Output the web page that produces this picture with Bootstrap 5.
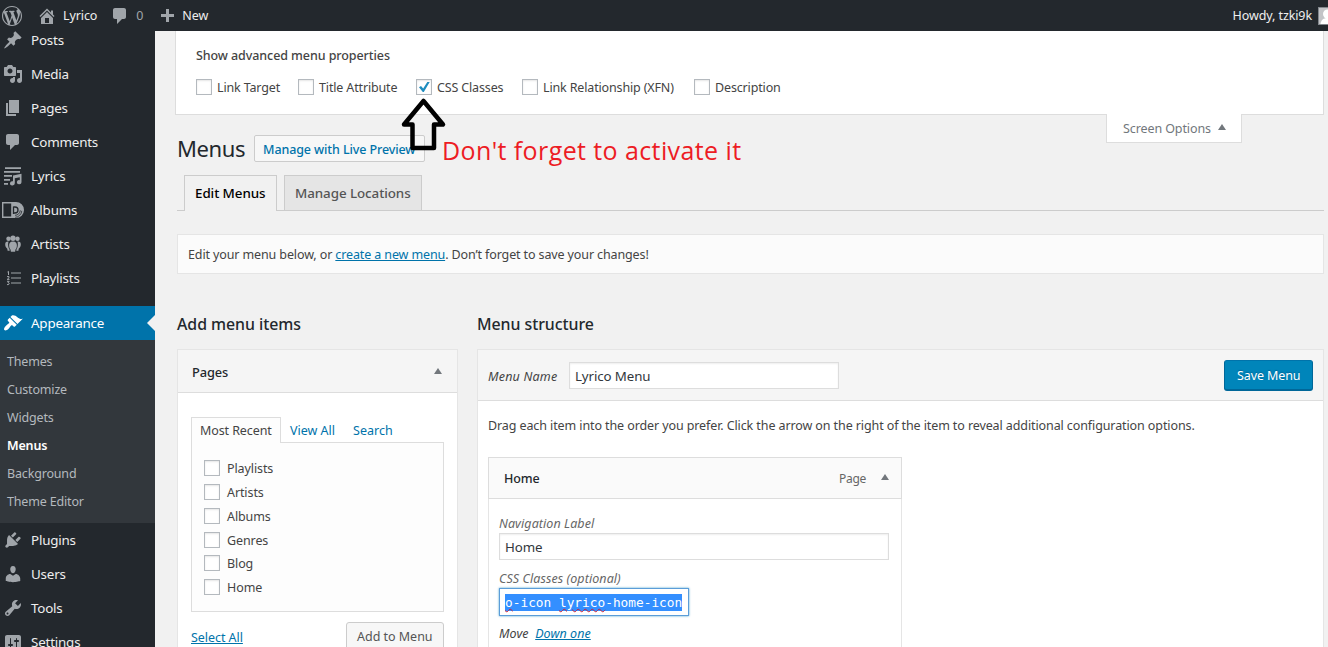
<!DOCTYPE html>
<html lang="en">
<head>
<meta charset="utf-8">
<meta name="viewport" content="width=device-width, initial-scale=1">
<title>Menus ‹ Lyrico — WordPress</title>
<link href="https://cdn.jsdelivr.net/npm/bootstrap@5.3.0/dist/css/bootstrap.min.css" rel="stylesheet">
<style>
html,body{height:100%;overflow:hidden}
body{font:12.5px/18px "Noto Sans","Open Sans",sans-serif;letter-spacing:-.1px;color:#444;background:#f1f1f1}
svg{display:block;flex:none;fill:currentColor}
a{color:#0073aa}
.adminbar{height:31px;background:#23282d;color:#eee;position:relative;z-index:3;padding-left:2px}
.adminbar svg{color:#a0a5aa}
.adminbar .ic-home{margin:0 6px 0 15px}
.adminbar .ic-note{margin:0 6px 0 13px}
.adminbar .ic-plus{margin:1px 5px 0 14px}
.adminbar .count{color:#a0a5aa}
.avatar{width:10px;height:18px;background:#c3c4c7;border:1px solid #82878c;border-right:0;overflow:hidden;margin-left:6px}
.adminbar .avatar svg{color:#fff}
.shell{height:616px;overflow:hidden}
.sidemenu{width:155px;background:#23282d;margin-top:-8px;height:632px}
.item{height:34px;padding-left:3px;gap:8px;font-size:13.4px;letter-spacing:-.2px;color:#eee}
.item svg{color:#a0a5aa}
.item .wide{margin:0 -1px 0 -1px}
.item.current{margin-top:11px;background:#0073aa;color:#fff;position:relative}
.item.current svg{color:#fff}
.item.current::after{content:"";position:absolute;right:0;top:9px;border:8px solid transparent;border-left:0;border-right-color:#f1f1f1}
.submenu{background:#32373c;padding:7px 0 8px 7px;color:#b4b9be;letter-spacing:-.17px}
.submenu div{height:28px;line-height:29px}
.submenu .on{color:#fff;font-weight:600}
.main{padding:0 4px 0 20px;min-width:0}
.meta{height:84px;background:#fff;border:1px solid #ddd;border-top:0;padding:16px 20px 0}
.meta .legend-text{font-weight:500;letter-spacing:-.08px}
.props{display:grid;grid-template-columns:102px 118px 106px 172px auto;margin-top:12px;letter-spacing:-.15px}
.props>div{gap:5px;padding-top:2px}
.tick{width:16px;height:16px;background:#fff;border:1px solid #b4b9be;box-shadow:inset 0 1px 2px rgba(0,0,0,.1);flex:none;margin-top:-2px}
.screenopt{width:136px;height:29px;background:#fff;border:1px solid #ddd;border-top:0;margin:-1px 82px 0 auto;padding:1px 0 0 16px;gap:7px;color:#72777c;position:relative}
.screenopt .tri{margin-top:-3px}
.tri{border:4px solid transparent;border-top:0;border-bottom:6px solid #72777c;width:0;height:0}
.wrapper{padding-left:2px}
.titlerow{height:27px;margin-top:-8px;gap:9px}
h1{font-size:22px;line-height:27px;font-weight:400;letter-spacing:-.4px;color:#23282d;margin:0;width:68px}
.preview{border:1px solid #ccc;background:#f7f7f7;border-radius:2px;color:#0073aa;font-weight:550;letter-spacing:-.1px;height:27px;width:171px;padding-left:8px;line-height:27px}
.tabrow{height:36px;margin-top:13px;padding-left:7px;border-bottom:1px solid #ccc;gap:7px;font-weight:550;font-size:13.4px;letter-spacing:-.08px}
.tabrow div{border:1px solid #ccc;border-bottom:0;height:35px;line-height:34px;padding-left:10px;background:#e5e5e5;color:#555}
.tabrow .on{height:36px;background:#f1f1f1;color:#000;width:93px}
.tabrow .off{width:138px}
.notice{height:40px;margin-top:23px;background:#fbfbfb;border:1px solid #e5e5e5;padding-left:10px;line-height:39px;letter-spacing:-.12px}
h2{font-size:15.9px;line-height:20px;font-weight:550;letter-spacing:-.06px;color:#23282d;margin:0 0 15px}
.halves{margin-top:40px;gap:19px}
.leftcol{width:281px;flex:none}
.panel{background:#fff;border:1px solid #e5e5e5;height:400px}
.phead{height:43px;background:#f5f5f5;border-bottom:1px solid #ddd;padding:1px 15px 0 14px;color:#23282d;font-weight:550;font-size:12.8px}
.phead .tri{margin-top:-2px}
.ptabs{margin:24px 13px 0;height:26px;line-height:27px;position:relative;z-index:1}
.ptabs .on{width:90px;height:26px;border:1px solid #ddd;border-bottom:0;background:#fdfdfd;padding-left:8px;margin-right:9px;line-height:26px}
.ptabs a{margin-right:18px;text-decoration:none;letter-spacing:0}
.plist{margin:-1px 13px 0;height:170px;border:1px solid #ddd;background:#fdfdfd;padding:13.400px 12px}
.plist div.opt{height:23.800px;gap:7px;padding-top:2px}
.pfoot{margin:10px 13px 0}
.pfoot a{line-height:31px;letter-spacing:-.05px}
.addbtn{width:98px;height:29px;border:1px solid #ccc;background:#f7f7f7;border-radius:3px;color:#555;padding-left:10px;line-height:28px;letter-spacing:-.02px}
.mhead{height:51px;background:#f5f5f5;border-bottom:1px solid #ddd;padding:0 10px}
.mhead em{width:70px;padding-top:3px;letter-spacing:.2px}
.field{background:#fff;border:1px solid #ddd;box-shadow:inset 0 1px 2px rgba(0,0,0,.07);height:27px;padding-left:5px;color:#32373c;font-size:13.300px;line-height:26px}
.menuname{width:270px;margin-left:11px}
.save{width:89px;height:31px;background:#0085ba;border:1px solid #006799;border-top-color:#0073aa;border-bottom-width:2px;border-radius:3px;color:#fff;padding-left:12px;line-height:29px;text-shadow:0 -1px 1px #006799}
.intro{margin:16px 0 0 10px}
.mitem{width:414px;margin:22px 0 0 10px;height:300px;border:1px solid #e5e5e5}
.mihead{height:42px;border:1px solid #ddd;background:#fafafa;margin:-1px;padding:1px 12px 0 15px;color:#23282d;font-weight:550}
.mihead .tri{margin-top:-3px}
.kind{color:#666;font-weight:400;font-size:12px;margin-right:15px;letter-spacing:-.3px;padding-top:1px}
.mibody{padding:17px 12px 0 10px}
.lab{color:#666;font-style:italic;letter-spacing:.08px;line-height:18px}
.lab.second{margin-top:10px}
.cssf{width:190px;height:28px;border:1px solid #5b9dd9;box-shadow:0 0 2px rgba(30,140,190,.8);background:#fff;padding-left:5px;padding-top:1px}
.cssf span{background:#338fff;color:#fff;height:17px;line-height:17px;font-family:"DejaVu Sans Mono",monospace;font-size:12.800px;letter-spacing:0;width:177px;white-space:pre}
.cssf u{text-decoration:underline wavy #c0223f 1px;text-underline-offset:1px}
.moverow{margin-top:9px;letter-spacing:.05px}
.arrow{position:absolute;left:400px;top:97px;z-index:4}
.remark{position:absolute;left:442px;top:133px;font-family:"Open Sans",sans-serif;font-size:25px;letter-spacing:.4px;line-height:34px;color:#ed1c24;white-space:nowrap;z-index:4}
</style>
</head>
<body>
<header class="adminbar d-flex align-items-center">
  <svg width="20" height="20" viewBox="0 0 20 20"><path d="M20 10c0-5.51-4.49-10-10-10C4.48 0 0 4.49 0 10c0 5.52 4.48 10 10 10 5.51 0 10-4.48 10-10zM7.78 15.37L4.37 6.22c.55-.02 1.17-.08 1.17-.08.5-.06.44-1.13-.06-1.11 0 0-1.45.11-2.37.11-.18 0-.37 0-.58-.01C4.12 2.69 6.87 1.11 10 1.11c2.33 0 4.45.87 6.05 2.34-.68-.11-1.65.39-1.65 1.58 0 .74.45 1.36.9 2.1.35.61.55 1.36.55 2.46 0 1.49-1.4 5-1.4 5l-3.03-8.37c.54-.02.82-.17.82-.17.5-.05.44-1.25-.06-1.22 0 0-1.44.12-2.38.12-.87 0-2.33-.12-2.33-.12-.5-.03-.56 1.2-.06 1.22l.92.08 1.26 3.41zM17.41 10c.24-.64.74-1.87.43-4.25.7 1.29 1.05 2.71 1.05 4.25 0 3.29-1.73 6.24-4.4 7.78.97-2.59 1.94-5.2 2.92-7.78zM6.1 18.09C3.12 16.65 1.11 13.53 1.11 10c0-1.3.23-2.48.72-3.59C3.25 10.3 4.67 14.2 6.1 18.09zm4.03-6.63l2.58 6.98c-.86.29-1.76.45-2.71.45-.79 0-1.57-.11-2.29-.33.81-2.38 1.62-4.74 2.42-7.1z"/></svg>
  <svg class="ic-home" width="20" height="20" viewBox="0 0 20 20"><path d="M16 8.5l1.53 1.53-1.06 1.06L10 4.6l-6.47 6.49-1.06-1.06L10 2.5l4 4v-2h2v4zm-6-2.46l6 5.99V18H4v-5.97zM12 17v-5H8v5h4z"/></svg>
  <span>Lyrico</span>
  <svg class="ic-note" width="20" height="20" viewBox="0 0 20 20"><path d="M5 2h9c1.1 0 2 .9 2 2v7c0 1.1-.9 2-2 2h-2l-5 5v-5H5c-1.1 0-2-.9-2-2V4c0-1.1.9-2 2-2z"/></svg>
  <span class="count">0</span>
  <svg class="ic-plus" width="20" height="20" viewBox="0 0 20 20"><path d="M17 8v3h-5v5H9v-5H4V8h5V3h3v5z"/></svg>
  <span>New</span>
  <span class="ms-auto">Howdy, tzki9k</span>
  <div class="avatar"><svg width="16" height="16" viewBox="0 0 16 16"><circle cx="8.5" cy="6" r="4.5"/><path d="M1.5 16c.5-4 3-6 7-6s6 2 7 6z"/></svg></div>
</header>
<div class="shell d-flex">
  <nav class="sidemenu flex-shrink-0">
    <div class="item d-flex align-items-center"><svg width="20" height="20" viewBox="0 0 20 20"><path d="M10.44 3.02l1.82-1.82 6.36 6.35-1.83 1.82c-1.05-.68-2.48-.57-3.41.36l-.75.75c-.92.93-1.04 2.35-.35 3.41l-1.83 1.82-2.41-2.41-2.8 2.79c-.42.42-3.38 2.71-3.8 2.29s1.86-3.39 2.28-3.81l2.79-2.79L4.1 9.36l1.83-1.82c1.05.69 2.48.57 3.4-.36l.75-.75c.93-.92 1.05-2.35.36-3.41z"/></svg>Posts</div>
    <div class="item d-flex align-items-center"><svg width="20" height="20" viewBox="0 0 20 20"><path d="M13 11V4c0-.55-.45-1-1-1h-1.67L9 1H5L3.67 3H2c-.55 0-1 .45-1 1v7c0 .55.45 1 1 1h10c.55 0 1-.45 1-1zM7 4.5c1.38 0 2.5 1.12 2.5 2.5S8.38 9.5 7 9.5 4.5 8.38 4.5 7 5.62 4.5 7 4.5zM14 6h5v10.5c0 1.38-1.12 2.5-2.5 2.5S14 17.88 14 16.5s1.12-2.5 2.5-2.5c.17 0 .34.02.5.05V9h-3V6zm-4 8.05V13h2v3.5c0 1.38-1.12 2.5-2.5 2.5S7 17.88 7 16.5 8.12 14 9.5 14c.17 0 .34.02.5.05z"/></svg>Media</div>
    <div class="item d-flex align-items-center"><svg width="20" height="20" viewBox="0 0 20 20"><path d="M6 15V2h10v13H6zm-1 1h8v2H3V5h2v11z"/></svg>Pages</div>
    <div class="item d-flex align-items-center"><svg width="20" height="20" viewBox="0 0 20 20"><path d="M5 2h9c1.1 0 2 .9 2 2v7c0 1.1-.9 2-2 2h-2l-5 5v-5H5c-1.1 0-2-.9-2-2V4c0-1.1.9-2 2-2z"/></svg>Comments</div>
    <div class="item d-flex align-items-center"><svg width="20" height="20" viewBox="0 0 20 20"><path d="M2 1.3h16v1.8H2zM1 5h16v1.8H1zM1 9h8v1.7H1zM1 13h6v1.7H1zM1 17h4v1.7H1zM10 9.5l8.5-1.7v8.4a2.3 2.1 0 1 1-1.7-2v-3l-5 1v5.1a2.4 2.1 0 1 1-1.8-2z"/></svg>Lyrics</div>
    <div class="item d-flex align-items-center"><svg class="wide" width="22" height="20" viewBox="0 0 22 20"><path fill-rule="evenodd" d="M0 2h14a8 8 0 0 1 0 16H0zm1.400 1.400v13.200h7.800V3.400z"/><g fill="none" stroke="#23282d"><path d="M11.500 6.500v7.500M11.500 7h1.500a3 3 0 0 1 0 6h-1.500" stroke-width="1.300"/><path d="M13 15.300a5.300 5.300 0 0 0 5.300-5M13.200 17.300a7 7 0 0 0 6.600-6.500" stroke-width=".8"/></g></svg>Albums</div>
    <div class="item d-flex align-items-center"><svg width="20" height="20" viewBox="0 0 20 20"><circle cx="5.500" cy="4.700" r="2.200"/><circle cx="14.500" cy="4.700" r="2.200"/><circle cx="10" cy="4.200" r="2.700"/><path d="M10 7.400c3 0 4 1.600 3.900 4.400-.1 2.200-.8 3-1.400 3.700l-.4 2.300H7.900l-.4-2.300c-.6-.7-1.300-1.500-1.400-3.700C6 9 7 7.400 10 7.400zM5.600 7.600C4.900 9 4.800 13 6.600 15.800l.1 1H4.600l-.3-2.100C2.900 13.700 2.100 12 2.200 10c.2-1.800 1.400-2.600 3.400-2.400zM14.400 7.600c.7 1.400.8 5.400-1 8.200l-.1 1h2.100l.3-2.100c1.400-1 2.200-2.700 2.100-4.700-.2-1.800-1.400-2.600-3.400-2.400z"/></svg>Artists</div>
    <div class="item d-flex align-items-center"><svg width="20" height="20" viewBox="0 0 20 20"><path d="M8 4.500h10v1H8zM8 9.500h10v1H8zM8 14.500h10v1H8z"/><path d="M4.500 4l1-.6V7M4 8.600h2v1.200L4.200 11.400H6.500M4 13.300h2.200L5 14.600c1.800 0 1.500 2 .2 2H4" fill="none" stroke="currentColor"/></svg>Playlists</div>
    <div class="item current d-flex align-items-center"><svg width="20" height="20" viewBox="0 0 20 20"><path d="M14.480 11.060L7.410 3.990l1.500-1.500c.5-.56 2.300-.47 3.510.32 1.210.8 1.430 1.280 2.910 2.100 1.180.64 2.450 1.260 4.450.85zm-.71.71L6.700 4.700 4.930 6.470c-.39.39-.39 1.020 0 1.410l1.060 1.060c.39.39.39 1.030 0 1.420-.6.6-1.430 1.110-2.210 1.690-.35.26-.7.53-1.010.84C1.430 14.230.4 16.080 1.400 17.070c.99 1 2.840-.03 4.180-1.360.31-.31.58-.66.85-1.020.57-.78 1.080-1.610 1.690-2.210.39-.39 1.020-.39 1.410 0l1.060 1.060c.39.39 1.020.39 1.410 0z"/></svg>Appearance</div>
    <div class="submenu"><div>Themes</div><div>Customize</div><div>Widgets</div><div class="on">Menus</div><div>Background</div><div>Theme Editor</div></div>
    <div class="item d-flex align-items-center"><svg width="20" height="20" viewBox="0 0 20 20"><path d="M13.110 4.360L9.870 7.600 8 5.730l3.240-3.240c.35-.34 1.050-.2 1.560.32.52.51.66 1.210.31 1.550zm-8 1.770l.91-1.120 9.010 9.010-1.190.84c-.71.71-2.630 1.160-3.820 1.160H6.140L4.900 17.260c-.59.59-1.540.59-2.120 0-.59-.58-.59-1.530 0-2.120l1.240-1.240v-3.880c0-1.130.4-3.190 1.090-3.890zm7.260 3.970l3.240-3.240c.34-.35 1.040-.21 1.550.31.52.51.66 1.210.31 1.550l-3.240 3.250z"/></svg>Plugins</div>
    <div class="item d-flex align-items-center"><svg width="20" height="20" viewBox="0 0 20 20"><path d="M10 9.250c-2.270 0-2.730-3.440-2.730-3.440C7 4.020 7.820 2 9.970 2c2.160 0 2.980 2.020 2.710 3.810 0 0-.41 3.440-2.680 3.440zm0 2.570L12.720 10c2.390 0 4.520 2.330 4.520 4.530v2.490s-3.650 1.130-7.240 1.130c-3.650 0-7.240-1.130-7.240-1.130v-2.490c0-2.250 1.940-4.480 4.470-4.480z"/></svg>Users</div>
    <div class="item d-flex align-items-center"><svg width="20" height="20" viewBox="0 0 20 20"><path d="M16.680 9.770c-1.340 1.340-3.300 1.670-4.950.99l-5.410 6.520c-.99.99-2.590.99-3.580 0s-.99-2.590 0-3.570l6.520-5.420c-.68-1.650-.35-3.610.99-4.950 1.280-1.280 3.120-1.620 4.720-1.060l-2.890 2.890 2.820 2.820 2.860-2.870c.53 1.580.18 3.390-1.080 4.650zM3.810 16.210c.4.39 1.040.39 1.430 0 .4-.4.4-1.040 0-1.430-.39-.4-1.030-.4-1.430 0-.39.39-.39 1.030 0 1.430z"/></svg>Tools</div>
    <div class="item d-flex align-items-center"><svg width="20" height="20" viewBox="0 0 20 20"><path d="M18 16V4c0-1.100-.9-2-2-2H4c-1.100 0-2 .9-2 2v12c0 1.100.9 2 2 2h12c1.100 0 2-.9 2-2zM8 11h1c.55 0 1 .45 1 1s-.45 1-1 1H8v1.500c0 .28-.22.5-.5.5s-.5-.22-.5-.5V13H6c-.55 0-1-.45-1-1s.45-1 1-1h1V5.500c0-.28.22-.5.5-.5s.5.22.5.5V11zm5-2h-1c-.55 0-1-.45-1-1s.45-1 1-1h1V5.500c0-.28.22-.5.5-.5s.5.22.5.5V7h1c.55 0 1 .45 1 1s-.45 1-1 1h-1v5.500c0 .28-.22.5-.5.5s-.5-.22-.5-.5V9z" transform="translate(0 1)"/></svg>Settings</div>
  </nav>
  <main class="main flex-grow-1">
    <section class="meta">
      <div class="legend-text">Show advanced menu properties</div>
      <div class="props">
        <div class="d-flex align-items-center"><span class="tick"></span>Link Target</div>
        <div class="d-flex align-items-center"><span class="tick"></span>Title Attribute</div>
        <div class="d-flex align-items-center"><span class="tick"><svg width="14" height="14" viewBox="0 0 14 14"><path d="M2 7.300l2-1.300 2.200 2.400L10.300 2h2.400L6.800 12h-1z" fill="#1e8cbe"/></svg></span>CSS Classes</div>
        <div class="d-flex align-items-center"><span class="tick"></span>Link Relationship (XFN)</div>
        <div class="d-flex align-items-center"><span class="tick"></span>Description</div>
      </div>
    </section>
    <div class="screenopt d-flex align-items-center">Screen Options<span class="tri"></span></div>
    <div class="wrapper">
      <div class="titlerow d-flex"><h1>Menus</h1><div class="preview">Manage with Live Preview</div></div>
      <div class="tabrow d-flex"><div class="on">Edit Menus</div><div class="off">Manage Locations</div></div>
      <div class="notice">Edit your menu below, or <a href="#">create a new menu</a>. Don’t forget to save your changes!</div>
      <div class="halves d-flex">
        <section class="leftcol">
          <h2>Add menu items</h2>
          <div class="panel">
            <div class="phead d-flex align-items-center justify-content-between">Pages<span class="tri"></span></div>
            <div class="ptabs d-flex"><div class="on">Most Recent</div><a href="#">View All</a><a href="#">Search</a></div>
            <div class="plist">
              <div class="opt d-flex align-items-center"><span class="tick"></span>Playlists</div>
              <div class="opt d-flex align-items-center"><span class="tick"></span>Artists</div>
              <div class="opt d-flex align-items-center"><span class="tick"></span>Albums</div>
              <div class="opt d-flex align-items-center"><span class="tick"></span>Genres</div>
              <div class="opt d-flex align-items-center"><span class="tick"></span>Blog</div>
              <div class="opt d-flex align-items-center"><span class="tick"></span>Home</div>
            </div>
            <div class="pfoot d-flex justify-content-between"><a href="#">Select All</a><div class="addbtn">Add to Menu</div></div>
          </div>
        </section>
        <section class="flex-grow-1">
          <h2>Menu structure</h2>
          <div class="panel">
            <div class="mhead d-flex align-items-center"><em>Menu Name</em><div class="field menuname">Lyrico Menu</div><div class="save ms-auto">Save Menu</div></div>
            <div class="intro">Drag each item into the order you prefer. Click the arrow on the right of the item to reveal additional configuration options.</div>
            <div class="mitem">
              <div class="mihead d-flex align-items-center">Home<span class="kind ms-auto">Page</span><span class="tri"></span></div>
              <div class="mibody">
                <div class="lab">Navigation Label</div>
                <div class="field">Home</div>
                <div class="lab second">CSS Classes (optional)</div>
                <div class="cssf d-flex align-items-center"><span><u>o</u>-icon <u>lyrico</u>-home-icon</span></div>
                <div class="moverow"><em>Move &nbsp;<a href="#">Down one</a></em></div>
              </div>
            </div>
          </div>
        </section>
      </div>
    </div>
  </main>
</div>
<svg class="arrow" width="48" height="54" viewBox="0 0 48 54"><path d="M23.500 4L43 27.500H34V51H12.500V27.500H4z" fill="none" stroke="#000" stroke-width="4.500" stroke-linejoin="round"/></svg>
<div class="remark">Don't forget to activate it</div>
<script src="https://cdn.jsdelivr.net/npm/bootstrap@5.3.0/dist/js/bootstrap.bundle.min.js"></script>
</body>
</html>
